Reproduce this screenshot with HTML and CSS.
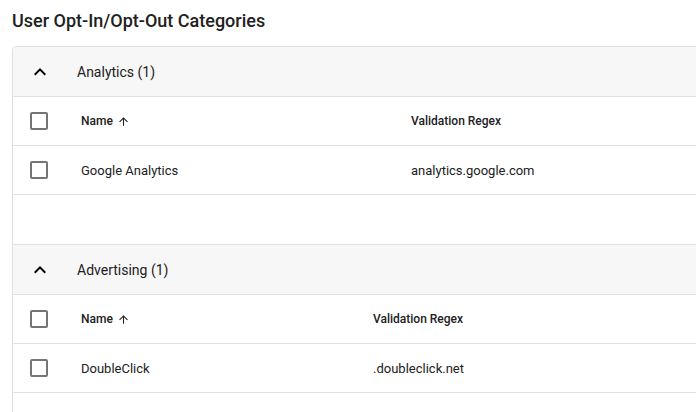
FILE: index.html
```html
<!DOCTYPE html>
<html lang="en">
<head>
  <meta charset="UTF-8" />
  <title>User Opt-In/Opt-Out Categories</title>
  <link rel="stylesheet" href="styles.css">
</head>
<body>
  <h1 class="page-title">User Opt-In/Opt-Out Categories</h1>

  <div class="card">
    <div class="panel">
      <div class="panel-header">
        <svg class="chevron" viewBox="0 0 24 24" width="24" height="24"><path d="M12 8l-6 6 1.41 1.41L12 10.83l4.59 4.58L18 14z"/></svg>
        <span>Analytics (1)</span>
      </div>
      <div class="row head-row">
        <span class="checkbox"></span>
        <span class="col-name wide">Name
          <svg class="sort" viewBox="0 0 24 24" width="13" height="13"><path d="M4 12l1.41 1.41L11 7.83V20h2V7.83l5.58 5.59L20 12l-8-8-8 8z"/></svg>
        </span>
        <span class="col-regex">Validation Regex</span>
      </div>
      <div class="row">
        <span class="checkbox"></span>
        <span class="col-name wide">Google Analytics</span>
        <span class="col-regex">analytics.google.com</span>
      </div>
      <div class="panel-spacer"></div>
    </div>

    <div class="panel">
      <div class="panel-header">
        <svg class="chevron" viewBox="0 0 24 24" width="24" height="24"><path d="M12 8l-6 6 1.41 1.41L12 10.83l4.59 4.58L18 14z"/></svg>
        <span>Advertising (1)</span>
      </div>
      <div class="row head-row">
        <span class="checkbox"></span>
        <span class="col-name narrow">Name
          <svg class="sort" viewBox="0 0 24 24" width="13" height="13"><path d="M4 12l1.41 1.41L11 7.83V20h2V7.83l5.58 5.59L20 12l-8-8-8 8z"/></svg>
        </span>
        <span class="col-regex">Validation Regex</span>
      </div>
      <div class="row">
        <span class="checkbox"></span>
        <span class="col-name narrow">DoubleClick</span>
        <span class="col-regex">.doubleclick.net</span>
      </div>
      <div class="panel-spacer"></div>
    </div>
  </div>
</body>
</html>
```

FILE: styles.css
```css
body {
  margin: 0;
  padding: 0 0 0 12px;
  font-family: Roboto, 'Liberation Sans', sans-serif;
  color: #212121;
  background: #fff;
  overflow: hidden;
}

.page-title {
  margin: 0;
  padding-top: 9px;
  height: 46px;
  box-sizing: border-box;
  font-size: 18px;
  font-weight: 500;
  line-height: 24px;
  color: #212121;
}

.card {
  width: 760px;
  border: 1px solid #e0e0e0;
  border-radius: 4px 0 0 0;
}

.panel-header {
  display: flex;
  align-items: center;
  height: 49px;
  padding-left: 15px;
  background-color: #f7f7f7;
  border-bottom: 1px solid #e0e0e0;
  font-size: 14px;
  color: #212121;
}

.panel:first-child .panel-header {
  border-radius: 4px 0 0 0;
}

.chevron {
  fill: #000;
  margin-right: 25px;
}

.row {
  display: flex;
  align-items: center;
  height: 48px;
  padding-left: 17px;
  border-bottom: 1px solid #e0e0e0;
  font-size: 13px;
}

.head-row {
  font-size: 12px;
  font-weight: 500;
}

.checkbox {
  width: 18px;
  height: 18px;
  box-sizing: border-box;
  border: 2px solid #757575;
  border-radius: 2px;
  margin-right: 33px;
}

.col-name {
  display: flex;
  align-items: center;
}

.col-name.wide { width: 330px; }
.col-name.narrow { width: 292px; }

.sort {
  fill: #212121;
  margin-left: 4px;
}

.panel-spacer {
  height: 49px;
  border-bottom: 1px solid #e0e0e0;
}
```
